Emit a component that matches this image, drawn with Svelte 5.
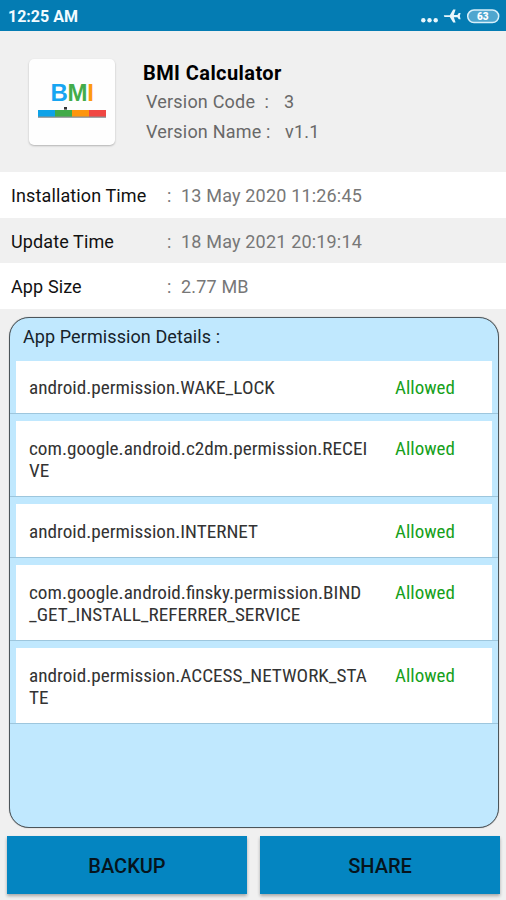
<script lang="ts">
  interface Info {
    label: string;
    value: string;
  }
  interface Permission {
    lines: string[];
    status: string;
  }

  const infos: Info[] = [
    { label: 'Installation Time', value: '13 May 2020 11:26:45' },
    { label: 'Update Time', value: '18 May 2021 20:19:14' },
    { label: 'App Size', value: '2.77 MB' },
  ];

  const permissions: Permission[] = [
    { lines: ['android.permission.WAKE_LOCK'], status: 'Allowed' },
    { lines: ['com.google.android.c2dm.permission.RECEI', 'VE'], status: 'Allowed' },
    { lines: ['android.permission.INTERNET'], status: 'Allowed' },
    { lines: ['com.google.android.finsky.permission.BIND', '_GET_INSTALL_REFERRER_SERVICE'], status: 'Allowed' },
    { lines: ['android.permission.ACCESS_NETWORK_STA', 'TE'], status: 'Allowed' },
  ];
</script>

<div class="screen">
  <div class="status-bar">
    <span class="clock">12:25 AM</span>
    <svg class="status-icons" width="80" height="20" viewBox="0 0 80 20">
      <g fill="#e8f6fc">
        <circle cx="3.3" cy="11.3" r="2.2" />
        <circle cx="9.5" cy="11.3" r="2.2" />
        <circle cx="15.7" cy="11.3" r="2.2" />
        <path d="M23.8 6.2 L24.4 8 H29.8 L33.2 13.6 H35.6 L33.8 8.2 H37.4 L38.8 10.2 H40.6 L39.8 7.1 L40.6 4 H38.8 L37.4 6 H33.8 L35.6 0.6 H33.2 L29.8 6.2 Z" />
      </g>
      <rect x="47.7" y="1" width="31" height="12.6" rx="6.3" fill="#4fa6cf" stroke="#d7effa" stroke-width="1.5" />
      <text x="62.7" y="11" text-anchor="middle">63</text>
    </svg>
  </div>

  <div class="header">
    <div class="app-icon">
      <div class="logo"><span class="b">B</span><span class="m">M</span><span class="i">I</span></div>
      <svg width="70" height="12" viewBox="0 0 70 12">
        <rect x="27" y="0" width="3" height="2.6" fill="#333" />
        <rect x="1" y="9" width="68" height="1.8" fill="#8b8f91" />
        <rect x="1" y="3" width="17" height="6.5" fill="#0da2e8" />
        <rect x="18" y="3" width="17" height="6.5" fill="#41aa48" />
        <rect x="35" y="3" width="17" height="6.5" fill="#fd950c" />
        <rect x="52" y="3" width="17" height="6.5" fill="#f04743" />
      </svg>
    </div>
    <div class="app-info">
      <h1>BMI Calculator</h1>
      <div class="version"><span class="code-label">Version Code&nbsp; :</span><span>3</span></div>
      <div class="version"><span class="name-label">Version Name :</span><span>v1.1</span></div>
    </div>
  </div>

  {#each infos as info}
    <div class="info-row">
      <span class="label">{info.label}</span>
      <span class="colon">:</span>
      <span class="value">{info.value}</span>
    </div>
  {/each}

  <div class="permissions">
    <h2>App Permission Details :</h2>
    <ul>
      {#each permissions as permission}
        <li>
          <div class="card">
            <div class="name">
              {#each permission.lines as line}
                <div>{line}</div>
              {/each}
            </div>
            <div class="allowed">{permission.status}</div>
          </div>
        </li>
      {/each}
    </ul>
  </div>

  <div class="buttons">
    <button>BACKUP</button>
    <button>SHARE</button>
  </div>
</div>

<style>
  :global(body) {
    margin: 0;
    background: #f0f0f0;
  }

  .screen {
    display: flex;
    flex-direction: column;
    width: 506px;
    height: 900px;
    overflow: hidden;
    box-sizing: border-box;
    background: #f0f0f0;
    color: #111;
    font-family: Roboto, 'Liberation Sans', sans-serif;
  }

  .status-bar {
    display: flex;
    flex: none;
    align-items: center;
    justify-content: space-between;
    box-sizing: border-box;
    height: 31px;
    padding: 2px 6px 0 8px;
    background: #047cb3;
    color: #f2fbff;
  }

  .clock {
    font-size: 16px;
    font-weight: 700;
  }

  .status-icons {
    margin-top: 4px;
  }

  .status-icons text {
    fill: #fff;
    font-size: 10px;
    font-weight: 900;
  }

  .header {
    display: flex;
    flex: none;
    box-sizing: border-box;
    height: 141px;
    padding: 28px 0 0 29px;
  }

  .app-icon {
    display: flex;
    flex-direction: column;
    align-items: center;
    box-sizing: border-box;
    width: 86px;
    height: 86px;
    padding-top: 20px;
    border-radius: 5px;
    background: #fefefe;
    box-shadow: 0 1px 2px rgba(0, 0, 0, 0.25);
  }

  .logo {
    height: 28px;
    font-family: 'Liberation Sans', sans-serif;
    font-size: 24px;
    font-weight: 700;
    letter-spacing: -0.3px;
    line-height: 28px;
  }

  .b {
    color: #17a5f2;
  }

  .m {
    color: #43ac4b;
  }

  .i {
    color: #fd990f;
  }

  .app-info {
    margin-left: 28px;
  }

  h1 {
    margin: 0;
    padding-top: 1px;
    color: #000;
    font-size: 20px;
    font-weight: 700;
    letter-spacing: 0.42px;
    line-height: 27px;
  }

  .version {
    display: flex;
    padding-left: 3px;
    color: #686868;
    font-size: 18px;
    letter-spacing: 0.2px;
    line-height: 30.2px;
  }

  .code-label {
    width: 138px;
  }

  .name-label {
    width: 139px;
  }

  .info-row {
    display: flex;
    flex: none;
    align-items: center;
    box-sizing: border-box;
    height: 45.5px;
    padding: 2px 0 0 11px;
    font-size: 18px;
    letter-spacing: 0.12px;
  }

  .info-row:nth-child(odd) {
    background: #fff;
  }

  .label {
    width: 156px;
  }

  .colon {
    width: 14px;
    color: #777;
  }

  .value {
    color: #777;
    letter-spacing: 0.18px;
  }

  .permissions {
    flex: none;
    box-sizing: border-box;
    width: 490px;
    height: 511px;
    margin: 8px 0 0 9px;
    border: 1px solid #4c555a;
    border-radius: 20px;
    background: #c0e8fe;
    box-shadow: 0 0 1px #888;
  }

  h2 {
    height: 43px;
    margin: 0;
    padding-left: 13px;
    color: #16222a;
    font-size: 18px;
    font-weight: 400;
    letter-spacing: 0.09px;
    line-height: 38px;
  }

  ul {
    margin: 0;
    padding: 0;
    list-style: none;
  }

  li {
    margin-bottom: 6.8px;
    padding: 0 6px;
    border-bottom: 1px solid #9dc6dd;
  }

  .card {
    display: flex;
    padding: 16.7px 0 14.1px 13px;
    background: #fff;
    font-family: 'Roboto Condensed', Roboto, sans-serif;
    font-size: 19.2px;
    font-stretch: condensed;
    line-height: 22.2px;
  }

  .name {
    flex: none;
    width: 366px;
    color: #333;
    white-space: nowrap;
  }

  .allowed {
    color: #16a01a;
    font-size: 19px;
  }

  .buttons {
    display: flex;
    flex: none;
    gap: 13px;
    margin: 8px 6px 0 7px;
  }

  button {
    flex: 1;
    height: 58px;
    padding: 2px 0 0;
    border: none;
    background: #0485c1;
    box-shadow: 0 2px 3px rgba(0, 0, 0, 0.3);
    color: #06141c;
    font-family: Roboto, sans-serif;
    font-size: 20px;
    font-weight: 500;
  }
</style>
